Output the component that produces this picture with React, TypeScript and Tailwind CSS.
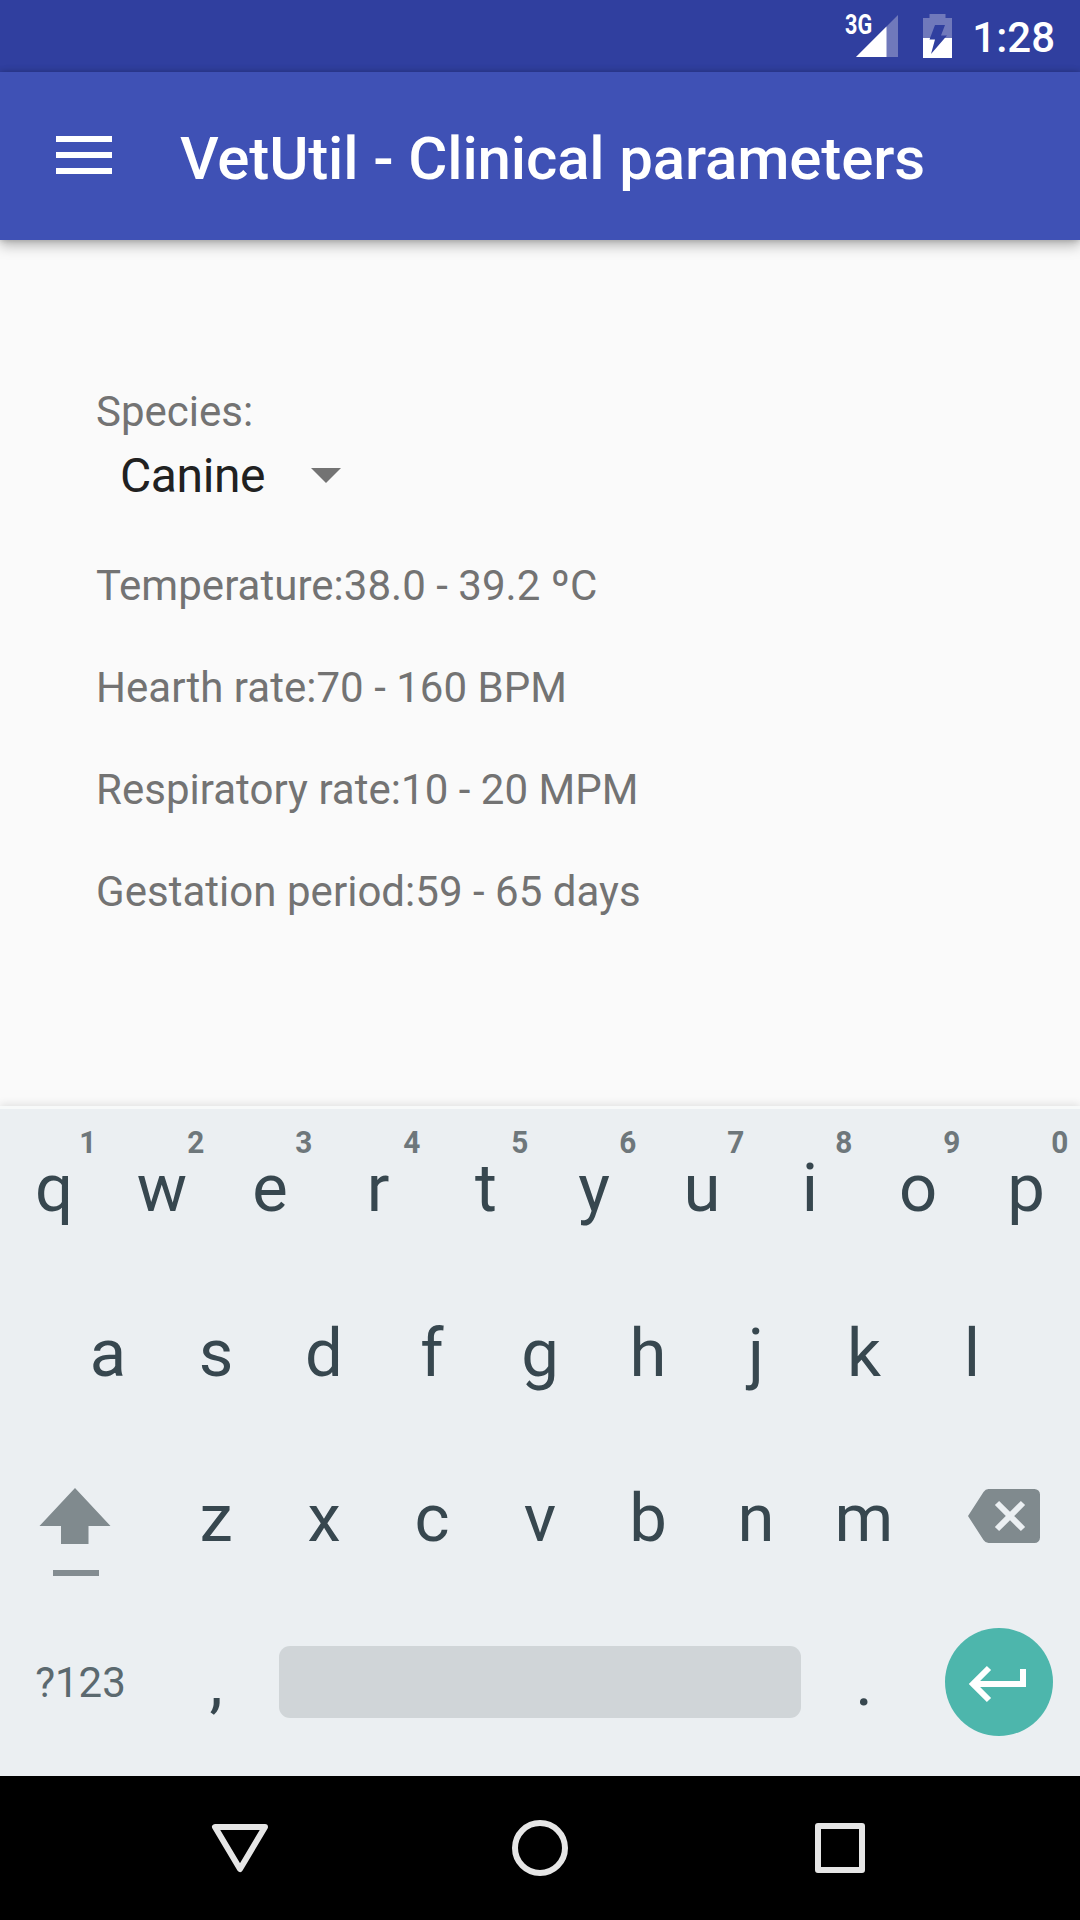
import { useState } from "react";

interface IParameter {
  label: string;
  value: string;
}

const parameters: IParameter[] = [
  { label: "Temperature:", value: "38.0 - 39.2 ºC" },
  { label: "Hearth rate:", value: "70 - 160 BPM" },
  { label: "Respiratory rate:", value: "10 - 20 MPM" },
  { label: "Gestation period:", value: "59 - 65 days" },
];

const StatusBar = () => (
  <div className="flex h-[72px] items-center justify-end bg-[#303f9f] pr-[25px] text-white">
    <div className="relative mr-[25px] h-[44px] w-[53px]">
      <svg className="h-[44px] w-[53px]" viewBox="0 0 53 44">
        <path d="M53 1V43H11z" fill="#7079bb" />
        <path d="M41.500 12.500V43H11z" fill="#fff" />
      </svg>
      <span className="absolute top-[-4px] left-0 origin-left scale-x-[0.8] text-[27px] leading-[30px] font-bold">
        3G
      </span>
    </div>
    <svg className="mr-[20px] h-[44px] w-[29px]" viewBox="0 0 29 44">
      <path d="M6.500 0h16v4H29v20H0V4h6.500z" fill="#7079bb" />
      <path d="M0 24h29v20H0z" fill="#fff" />
      <path d="M12 11H22l-4 10.500H24L8 40l4-14.500H6.500z" fill="#303f9f" />
    </svg>
    <span className="pt-[4px] text-[42px] leading-[48px] font-medium">1:28</span>
  </div>
);

const Toolbar = ({ title }: { title: string }) => (
  <header className="relative z-10 flex h-[168px] items-center bg-[#3f51b5] pl-[56px] text-white shadow-[0_6px_12px_rgba(0,0,0,0.26),0_0_6px_rgba(0,0,0,0.22)]">
    <button className="flex w-[56px] flex-col gap-[10px] pb-[2px]">
      <span className="h-[6px] w-full bg-white" />
      <span className="h-[6px] w-full bg-white" />
      <span className="h-[6px] w-full bg-white" />
    </button>
    <h1 className="ml-[68px] pt-[5px] text-[60px] leading-[70px] font-medium tracking-[-0.14px] whitespace-nowrap">
      {title}
    </h1>
  </header>
);

const Key = ({ char, hint }: { char: string; hint?: string }) => (
  <button className="relative flex h-[165px] w-[108px] items-center justify-center text-[67px] leading-[80px] text-[#37474f]">
    {char}
    {hint ? (
      <span className="absolute top-[20px] right-[11px] origin-center scale-x-[0.96] text-[31px] leading-[36px] font-bold text-[#6e777b]">
        {hint}
      </span>
    ) : null}
  </button>
);

const Keyboard = () => (
  <div className="relative h-[670px] bg-[#ebeff2] text-[#37474f] shadow-[inset_0_3px_0_#f7f9f9,0_-2px_8px_rgba(0,0,0,0.1)]">
    <div className="-mt-px flex">
      {"qwertyuiop".split("").map((char, i) => (
        <Key key={char} char={char} hint={String((i + 1) % 10)} />
      ))}
    </div>
    <div className="flex justify-center">
      {"asdfghjkl".split("").map((char) => (
        <Key key={char} char={char} />
      ))}
    </div>
    <div className="flex">
      <button className="flex w-[162px] items-start pt-[53px] pl-[39px]">
        <svg className="h-[90px] w-[72px]" viewBox="0 0 72 90">
          <path d="M36 0L71.500 38H49.500v18h-27.500V38H0.500z" fill="#808a8e" />
          <path d="M14 82h46v6H14z" fill="#838c91" />
        </svg>
      </button>
      {"zxcvbnm".split("").map((char) => (
        <Key key={char} char={char} />
      ))}
      <button className="flex w-[162px] items-start pt-[54px] pl-[50px]">
        <svg className="h-[54px] w-[72px]" viewBox="0 0 72 54">
          <path
            d="M20.500 0H66.500a5.500 5.500 0 0 1 5.500 5.500V48.500a5.500 5.500 0 0 1-5.500 5.500H20.500Q17.500 54 15.500 51L0 27L15.500 3Q17.500 0 20.500 0z"
            fill="#808a8e"
          />
          <path
            d="M29 14L55 40M55 14L29 40"
            stroke="#ebeff2"
            strokeWidth="6"
          />
        </svg>
      </button>
    </div>
    <div className="flex h-[164px] items-center">
      <button className="w-[162px] pt-[1px] pr-[1px] text-center text-[42px] leading-[48px] text-[#5b696f]">
        ?123
      </button>
      <Key char="," />
      <span className="mx-[9px] h-[72px] w-[522px] rounded-[11px] bg-[#d0d5d8]" />
      <Key char="." />
      <button className="ml-[27px] flex size-[108px] items-center justify-center rounded-full bg-[#4db6ac]">
        <svg className="size-[72px]" viewBox="0 0 72 72">
          <path
            d="M60 23V38H12M26 22L10 38L26 54"
            fill="none"
            stroke="#fff"
            strokeWidth="6"
          />
        </svg>
      </button>
    </div>
  </div>
);

const NavigationBar = () => (
  <div className="flex h-[144px] items-center justify-center gap-[240px] bg-black">
    <svg className="size-[60px]" viewBox="0 0 60 60" fill="none" stroke="#e6e6e6" strokeWidth="6" strokeLinejoin="round">
      <path d="M5 9H55L30 51z" />
    </svg>
    <svg className="size-[60px]" viewBox="0 0 60 60" fill="none" stroke="#e6e6e6" strokeWidth="6">
      <circle cx="30" cy="30" r="25" />
    </svg>
    <svg className="size-[60px]" viewBox="0 0 60 60" fill="none" stroke="#e6e6e6" strokeWidth="6" strokeLinejoin="round">
      <path d="M8 8H52V52H8z" />
    </svg>
  </div>
);

const App = () => {
  const [species] = useState("Canine");
  return (
    <div className="flex h-[1920px] w-[1080px] flex-col overflow-hidden bg-[#fafafa] font-['Roboto',sans-serif]">
      <StatusBar />
      <Toolbar title="VetUtil - Clinical parameters" />
      <main className="flex-1 px-[96px] pt-[144px] text-[42px] text-[#737373]">
        <p className="leading-[56px]">Species:</p>
        <button className="flex h-[72px] items-center pl-[24px]">
          <span className="text-[48px] leading-[56px] tracking-[-0.4px] text-[#212121]">
            {species}
          </span>
          <svg className="mb-[1px] ml-[46px] h-[15px] w-[30px]" viewBox="0 0 30 15">
            <path d="M0 0H30L15 15z" fill="#737373" />
          </svg>
        </button>
        <div className="mt-[23px] tracking-[0.03px]">
          {parameters.map(({ label, value }) => (
            <p key={label} className="leading-[102px]">
              {label}
              {value}
            </p>
          ))}
        </div>
      </main>
      <Keyboard />
      <NavigationBar />
    </div>
  );
};

export default App;
